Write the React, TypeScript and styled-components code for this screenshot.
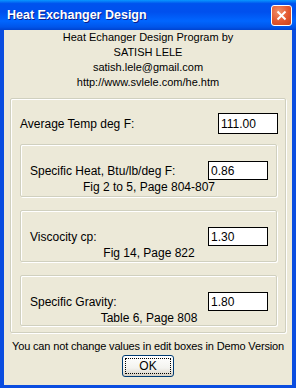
import styled, { createGlobalStyle } from "styled-components";

const GlobalStyle = createGlobalStyle`
  html, body {
    margin: 0;
    padding: 0;
    background: #ece9d8;
  }
  * {
    box-sizing: border-box;
  }
`;

const Window = styled.div`
  width: 296px;
  height: 388px;
  display: flex;
  flex-direction: column;
  background: #0a4de0;
  font-family: "Liberation Sans", Arial, sans-serif;
  font-size: 11px;
  color: #000;
`;

const TitleBar = styled.div`
  height: 30px;
  flex: none;
  display: flex;
  align-items: center;
  justify-content: space-between;
  padding: 0 4px 0 7px;
  background: linear-gradient(
    to bottom,
    #0997ff 0%,
    #0053ee 12%,
    #0050ee 40%,
    #0066ff 70%,
    #0055ea 90%,
    #0043cf 100%
  );
`;

const Title = styled.span`
  color: #fff;
  font-weight: bold;
  font-size: 12.5px;
  text-shadow: 1px 1px 0 #0a1e8c;
`;

const CloseButton = styled.div`
  width: 21px;
  height: 21px;
  border: 1px solid #fff;
  border-radius: 3px;
  background: radial-gradient(circle at 35% 30%, #f0906a 0%, #e3572f 55%, #c9411b 100%);
  display: flex;
  align-items: center;
  justify-content: center;
`;

const Body = styled.div`
  flex: 1;
  margin: 0 4px 3px 4px;
  background: #ece9d8;
  display: flex;
  flex-direction: column;
  align-items: stretch;
`;

const Header = styled.div`
  text-align: center;
  line-height: 15px;
  font-size: 11px;
`;

const OuterGroup = styled.div`
  margin: 8px 6px 0 6px;
  border: 1px solid #d0d0bf;
  box-shadow: inset 1px 1px 0 #fff, 1px 1px 0 #fff;
  border-radius: 2px;
  padding: 14px 7px 6px 9px;
  display: flex;
  flex-direction: column;
`;

const Row = styled.div`
  display: flex;
  align-items: center;
  justify-content: space-between;
`;

const Label = styled.span`
  font-size: 12px;
`;

const EditBox = styled.div<{ $tall?: boolean }>`
  width: 60px;
  height: ${(p) => (p.$tall ? 21 : 19)}px;
  background: #fff;
  border: 1px solid #000;
  padding: 0 2px;
  font-size: 12px;
  display: flex;
  align-items: center;
`;

const InnerGroup = styled.div<{ $top: number; $bottom: number }>`
  margin-top: ${(p) => p.$top}px;
  margin-right: 1px;
  border: 1px solid #d0d0bf;
  box-shadow: inset 1px 1px 0 #fff, 1px 1px 0 #fff;
  border-radius: 2px;
  padding: 16px 8px ${(p) => p.$bottom}px 9px;
`;

const Caption = styled.div`
  text-align: center;
  font-size: 12px;
  line-height: 14px;
`;

const Notice = styled.div`
  text-align: center;
  font-size: 11px;
  letter-spacing: -0.15px;
  margin-top: 6px;
  line-height: 14px;
`;

const ButtonRow = styled.div`
  display: flex;
  justify-content: center;
  margin-top: 2px;
`;

const OkButton = styled.button`
  width: 52px;
  height: 22px;
  padding: 2px;
  border: 1px solid #003c74;
  border-radius: 3px;
  background: linear-gradient(to bottom, #ffffff 0%, #f3f3ef 60%, #d6d0c5 100%);
  font-family: "Liberation Sans", Arial, sans-serif;
  font-size: 12px;
  color: #000;
  display: flex;
`;

const FocusRing = styled.span`
  flex: 1;
  border: 1px dotted #000;
  display: flex;
  align-items: center;
  justify-content: center;
`;

const groups = [
  { label: "Specific Heat, Btu/lb/deg F:", value: "0.86", caption: "Fig 2 to 5, Page 804-807", top: 10, bottom: 2 },
  { label: "Viscocity cp:", value: "1.30", caption: "Fig 14, Page 822", top: 13, bottom: 1 },
  { label: "Specific Gravity:", value: "1.80", caption: "Table 6, Page 808", top: 13, bottom: 0 },
];

export default function App() {
  return (
    <>
      <GlobalStyle />
      <Window>
        <TitleBar>
          <Title>Heat Exchanger Design</Title>
          <CloseButton>
            <svg width="11" height="11" viewBox="0 0 11 11">
              <path d="M1.5 1.5 L9.5 9.5 M9.5 1.5 L1.5 9.5" stroke="#fff" strokeWidth="2" />
            </svg>
          </CloseButton>
        </TitleBar>
        <Body>
          <Header>
            <div>Heat Echanger Design Program by</div>
            <div>SATISH LELE</div>
            <div>satish.lele@gmail.com</div>
            <div>http://www.svlele.com/he.htm</div>
          </Header>
          <OuterGroup>
            <Row>
              <Label>Average Temp deg F:</Label>
              <EditBox $tall>111.00</EditBox>
            </Row>
            {groups.map((g) => (
              <InnerGroup key={g.label} $top={g.top} $bottom={g.bottom}>
                <Row>
                  <Label>{g.label}</Label>
                  <EditBox>{g.value}</EditBox>
                </Row>
                <Caption>{g.caption}</Caption>
              </InnerGroup>
            ))}
          </OuterGroup>
          <Notice>You can not change values in edit boxes in Demo Version</Notice>
          <ButtonRow>
            <OkButton>
              <FocusRing>OK</FocusRing>
            </OkButton>
          </ButtonRow>
        </Body>
      </Window>
    </>
  );
}
